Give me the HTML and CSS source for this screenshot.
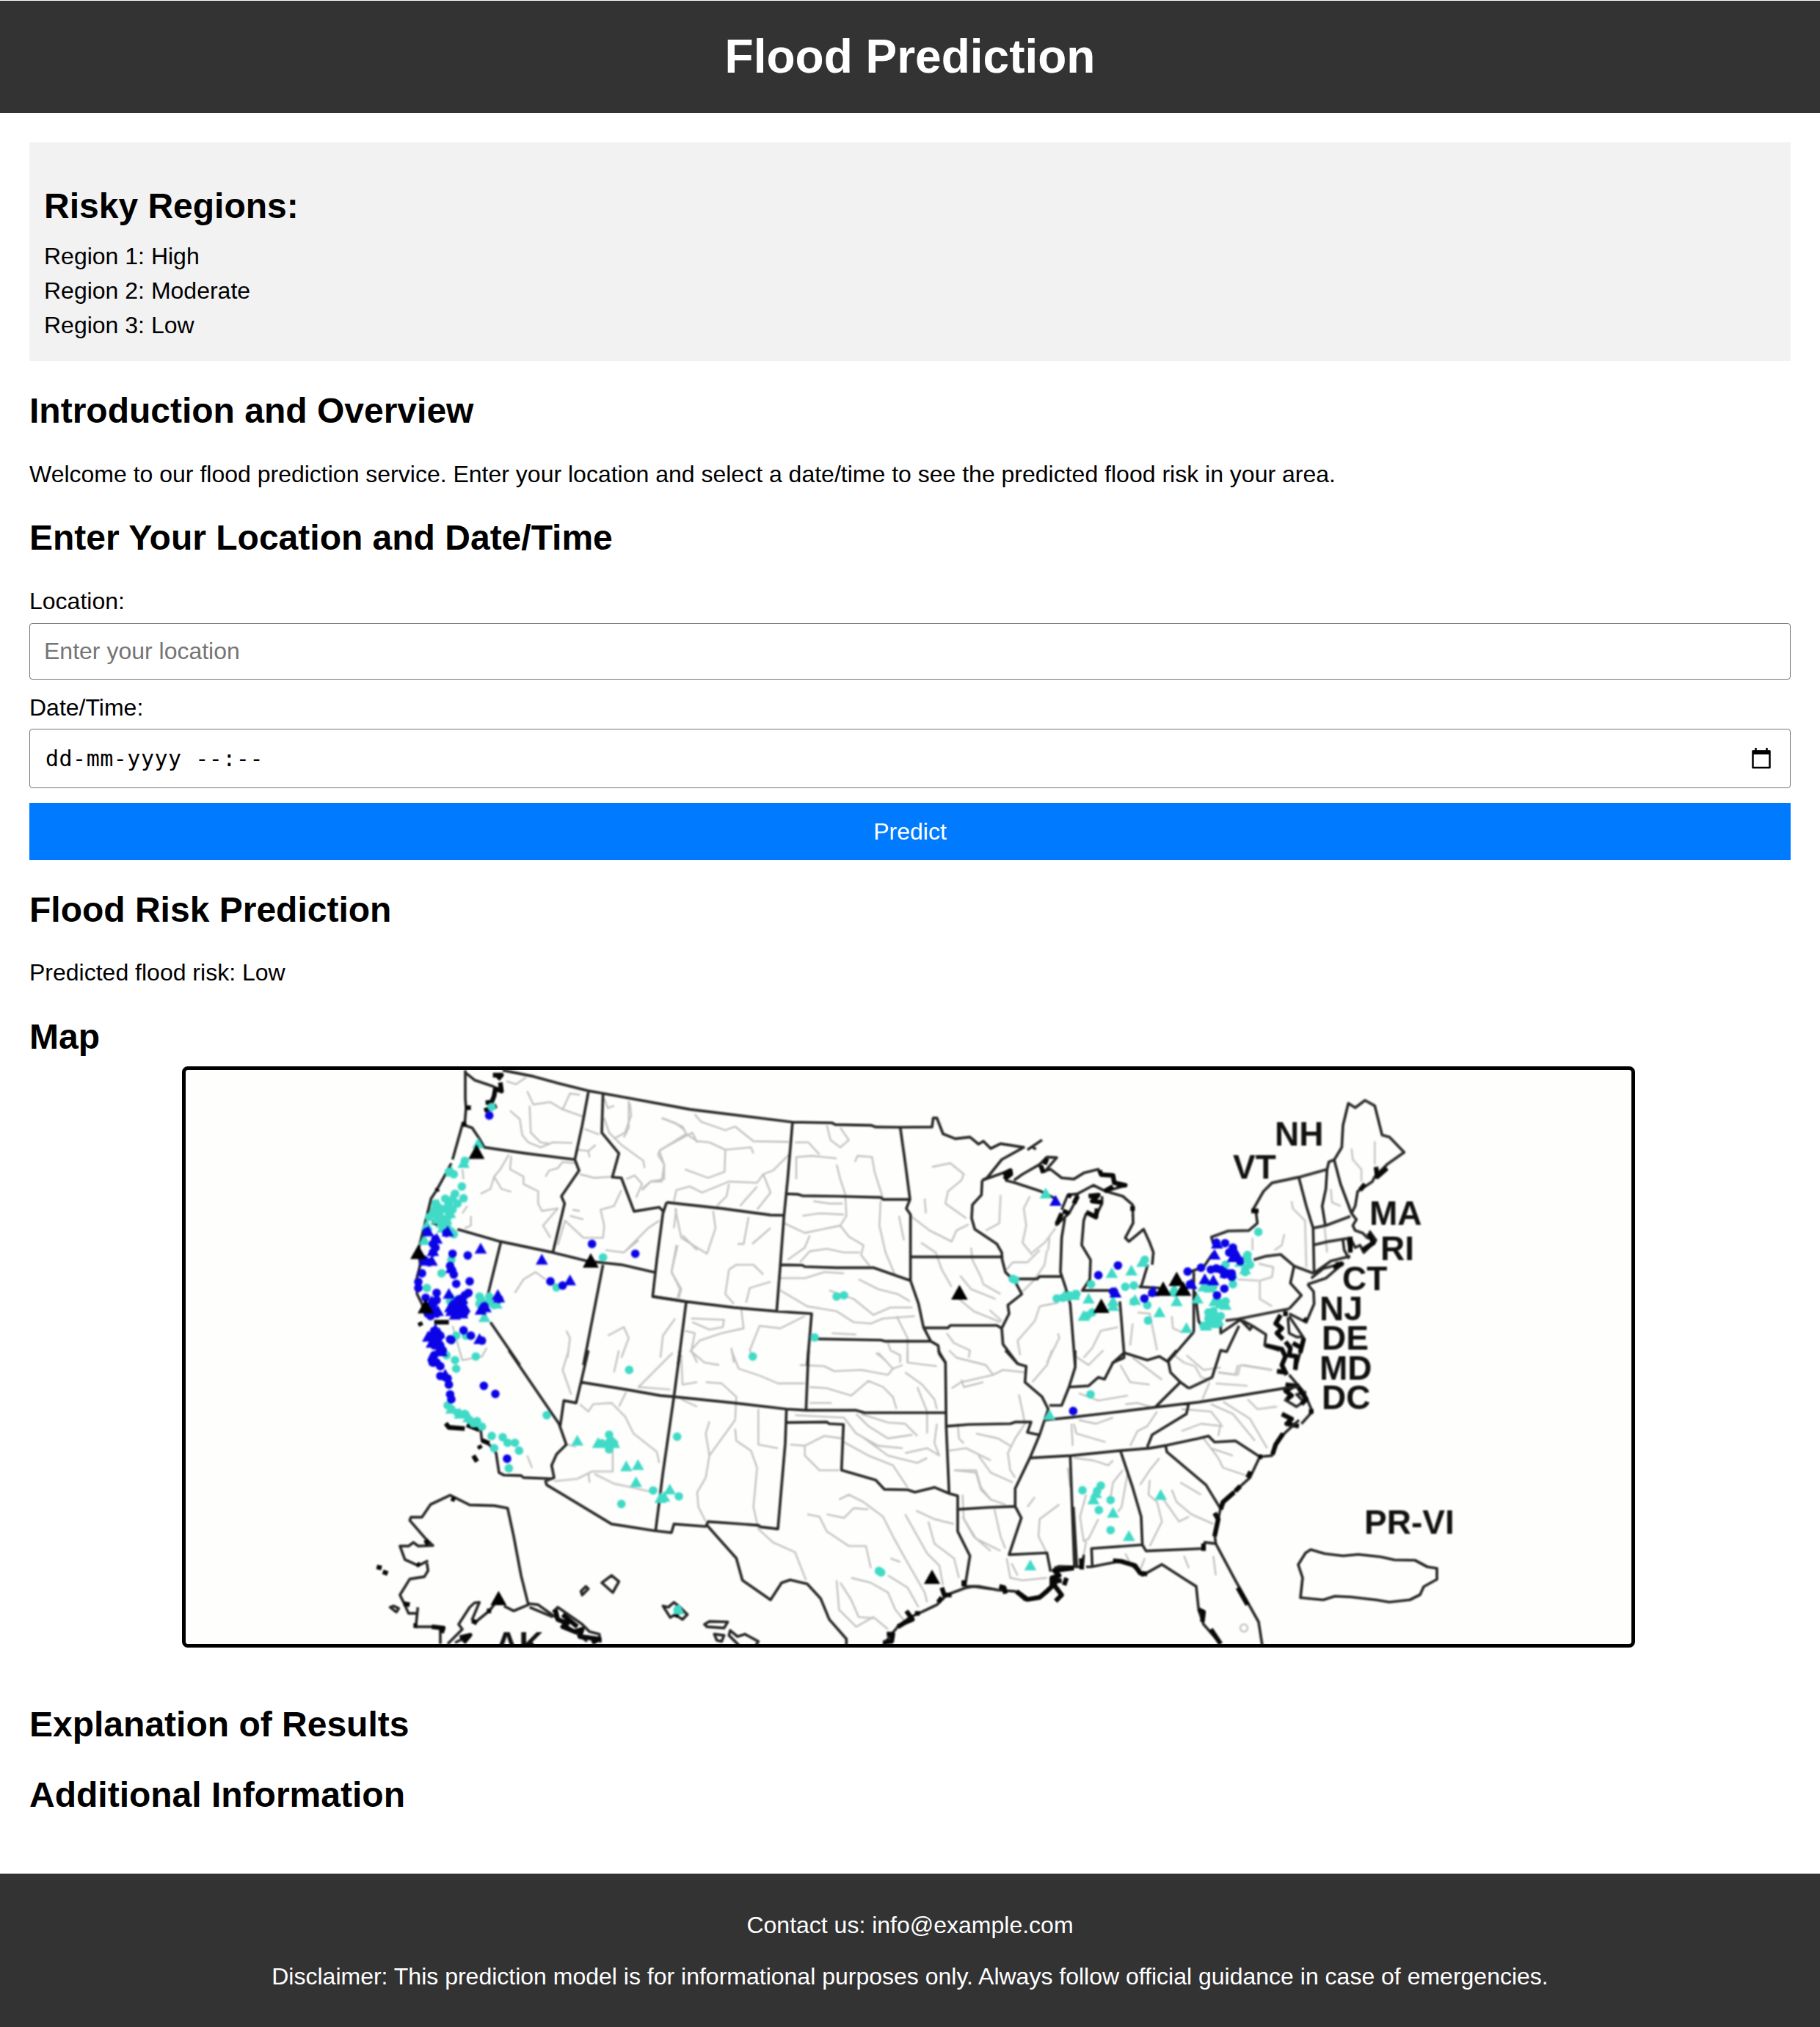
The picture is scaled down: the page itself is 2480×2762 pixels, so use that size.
FILE: index.html
```html
<!DOCTYPE html>
<html lang="en">
<head>
<meta charset="utf-8">
<title>Flood Prediction</title>
<link rel="stylesheet" href="styles.css">
</head>
<body>
<header class="site-header"><h1>Flood Prediction</h1></header>
<main class="content">
  <section class="risky-regions">
    <h2>Risky Regions:</h2>
    <ul>
      <li>Region 1: High</li>
      <li>Region 2: Moderate</li>
      <li>Region 3: Low</li>
    </ul>
  </section>
  <section>
    <h2 class="intro-title">Introduction and Overview</h2>
    <p>Welcome to our flood prediction service. Enter your location and select a date/time to see the predicted flood risk in your area.</p>
  </section>
  <section>
    <h2 class="form-title">Enter Your Location and Date/Time</h2>
    <form class="predict-form">
      <label for="location">Location:</label>
      <input class="field field-location" type="text" id="location" placeholder="Enter your location">
      <label for="datetime">Date/Time:</label>
      <div class="field field-date" id="datetime">
        <span>dd-mm-yyyy --:--</span>
        <svg class="calendar" viewBox="0 0 26 29"><path d="M5.500 0v4M20.500 0v4" stroke="#000" stroke-width="2.500"/><path d="M1.500 4.500h23v22.500h-23z" fill="none" stroke="#000" stroke-width="2.500" stroke-linejoin="round"/><path d="M1 3.500h24v5.500H1z"/></svg>
      </div>
      <button class="predict" type="button">Predict</button>
    </form>
  </section>
  <section>
    <h2>Flood Risk Prediction</h2>
    <p>Predicted flood risk: Low</p>
  </section>
  <section>
    <h2 class="map-title">Map</h2>
    <div class="map">
    <svg class="map-svg" viewBox="253 1458 1970 782" preserveAspectRatio="none">
      <defs>
        <marker id="dn" class="mk" markerUnits="userSpaceOnUse" markerWidth="40" markerHeight="40" refX="20" refY="20"><circle cx="20" cy="20" r="17.500" fill="#0c04e6"/></marker>
        <marker id="dt" class="mk" markerUnits="userSpaceOnUse" markerWidth="40" markerHeight="40" refX="20" refY="20"><circle cx="20" cy="20" r="17.500" fill="#40dac6"/></marker>
        <marker id="tn" class="mk" markerUnits="userSpaceOnUse" markerWidth="56" markerHeight="56" refX="28" refY="28"><path d="M28 3L53 47H3z" fill="#0c04e6"/></marker>
        <marker id="tt" class="mk" markerUnits="userSpaceOnUse" markerWidth="56" markerHeight="56" refX="28" refY="28"><path d="M28 3L53 47H3z" fill="#40dac6"/></marker>
        <marker id="tb" class="mk" markerUnits="userSpaceOnUse" markerWidth="70" markerHeight="70" refX="35" refY="35"><path d="M35 3L68 62H2z" fill="#000"/></marker>
      </defs>
      <g class="soft">
      <!-- rivers -->
      <g class="river">
        <g transform="translate(500 1440) scale(.33333)">
          <path d="M570 100L610 112 650 85M655 140L680 195 750 185 800 215 885 245M800 215L830 150 870 155M665 200L670 310 710 350 745 355M585 220L625 255 635 320 660 350 710 370 760 350 840 352M890 295L950 318M970 170L985 210 1010 200M1075 190L1080 240 1055 310 1010 335M970 250L990 310 1040 360 1130 425 1135 455M590 405L585 460 640 490 640 520 700 550 700 600 715 630 780 620 720 690 750 740M580 400L545 460 520 490 550 540 590 552M520 490L505 540 465 560M730 490L745 465 780 455 800 430 850 435M860 380L905 385 935 360M905 385L910 410M870 480L930 495 1000 490M1040 545L1010 610 955 625 970 690 965 740 885 740 810 670 780 770M1060 500L1095 485 1125 520 1100 575M1125 540L1160 510 1215 500 1215 440 1190 400 1200 380 1330 310 1350 350M1205 250L1260 270 1300 300M1060 790L1150 700 1195 670M975 790L1050 800 1110 750M605 965L640 910 690 880 730 910M1265 620L1255 700M1290 730L1350 790M1270 770L1245 880 1280 950 1270 985M985 1140L1050 1105 1070 1150 1040 1230M815 1120L830 1150 820 1230M1260 1070L1210 1140 1200 1230M1300 1120L1340 1130 1325 1210"/>
          <path d="M390 460L395 500M410 610L390 640M425 650L425 690 400 700M350 1100L390 1240 470 1225 490 1190M840 625L870 630M830 650L885 665"/>
        </g>
        <g transform="translate(850 1440) scale(.33333)">
          <path d="M20 180L20 290 0 330M155 250L240 285 255 315 145 385 165 440 155 510 110 510 75 545M255 315L300 345 350 350 415 380 520 370 530 395M290 235L315 265 415 300 455 285 530 345 675 348M415 380L412 470 345 495 250 460M675 400L610 465 570 480 545 515 430 510 320 555 270 530 215 545 205 590M570 480L600 555 545 625M545 530L475 610M430 520L420 570 380 610M210 620L235 740 340 805 375 700 365 630M215 770L195 880 235 950 225 985M510 655L490 765 465 765M600 700L525 765M700 350L755 350 800 400M705 500L705 410 770 405 870 415M830 280L845 340 885 370 920 340 885 290M945 430L955 405 1015 410 1025 470 1060 580M870 440L885 500 905 560 910 650 885 690 740 720 655 680M775 590L840 600 895 600M730 650L800 640 900 645M885 690L920 735 980 770 970 810 1005 855M670 830L740 780 760 730M720 840L760 795 830 785 900 800 965 800M1050 590L1045 690 1070 800 1110 895M1125 650L1145 750M1260 450L1335 435 1390 480 1380 505 1325 550 1315 600 1400 660M1230 580L1235 640M1172 650L1250 710 1340 755 1360 710 1410 685M640 905L740 905 820 880 900 885M430 870L460 850 530 850 570 890M430 870L415 970 450 1010M600 920L515 945 500 1005M640 955L750 1020 870 1040 940 1085 1010 1090 1060 1070 1190 1060M840 955L940 990 1020 1055 1090 1025 1180 1025M960 910L1040 950 1120 970 1170 1000M1115 1060L1160 1150 1160 1250M275 1070L410 1075 405 1105 350 1115 280 1085M480 1030L490 1110 400 1130 310 1160 275 1200 300 1250M740 1060L640 1110 555 1100 515 1200 525 1220M850 1130L950 1135M440 1190L450 1250M1030 1210L1070 1240M1080 1170L1090 1200 1130 1220 1130 1250"/>
        </g>
        <g transform="translate(1250 1440) scale(.33333)">
          <path d="M15 760L75 800 100 870 140 940M220 780L225 830 260 900 270 930 340 970M175 895L220 950 320 990M170 990L230 1040 340 1085M295 1035L345 1080M340 565L335 680 280 710M460 570L435 620 445 690 430 760 470 810M470 800L520 760 565 700M540 740L535 790M365 870L390 840 450 840 500 790M530 790L520 850 480 910 430 960M575 1130L580 1150 530 1250M500 1020L575 1005M500 1020L480 1080 410 1160 420 1220M820 1105L750 1120 715 1190 680 1230M900 1045L950 1050 980 1200M880 1090L870 1180M1040 1060L1045 1110 1080 1125M120 1130L150 1170 215 1200 210 1230"/>
        </g>
        <g transform="translate(1600 1440) scale(.33333)">
          <path d="M725 375L730 420 765 460 765 510M820 345L820 440M640 540L645 595 680 610M480 590L485 620 535 670 540 860M615 700L625 800M450 725L440 770 410 790M320 740L320 790M345 845L405 860 400 900 350 915 350 990 400 1020M260 910L345 915M0 1220L40 1250 85 1265 110 1310 145 1320M180 1290L260 1300 270 1260 400 1280M170 1335L300 1345M145 1330L115 1400M300 1400L340 1440 420 1430"/>
        </g>
        <g transform="translate(500 1840) scale(.33333)">
          <path d="M825 0L800 80 835 180M870 220L905 250 925 220 1000 215 1055 270 1090 340 1185 415 1195 460M1060 170L1030 230M1030 0L1010 90M1250 10L1170 90 1110 150 1240 160M820 385L855 395M1005 400L1005 495 920 495 860 525 765 535M905 500L910 540M930 505L1010 545 1060 555 1170 580M655 430L675 480M1285 200L1350 230"/>
        </g>
        <g transform="translate(850 1840) scale(.33333)">
          <path d="M440 0L470 75 560 105 630 135 740 135M235 20L240 140 300 130M270 0L330 50 390 60M335 130L400 135 460 190 455 285 350 430 335 340 350 290M350 430L335 520 300 580 305 640 335 700M455 320L460 370 520 410 545 480 530 640 550 730 610 785 700 825 745 940M550 240L550 385 630 400M680 385L740 390 820 350 890 360M740 390L740 430 800 490 880 490M720 60L820 65 860 85 970 80 1080 100 1100 75M1040 10L1100 75 1140 60M760 150L830 155 930 185 1000 125 1060 150 1100 190 1115 240M1150 90L1220 140 1270 200 1280 240M1200 150L1240 250 1240 340M1160 0L1160 50 1280 65M760 215L850 215M700 265L900 275 950 340 1040 390 1140 400M950 260L1000 310 1080 360 1180 345M970 260L1080 295 1150 300 1200 350M900 375L1000 430 1100 470 1160 560M970 350L1080 430 1200 460 1240 440M1280 300L1270 380 1290 430 1240 400 1150 420M1330 410L1400 400 1500 450M1350 490L1440 500 1460 570 1500 610M880 610L920 590 980 620 1060 680 1100 760 1150 850 1230 990 1240 1030M750 670L800 680 830 740 920 800 990 800 1010 890M830 670L900 685 940 645 1000 650M1150 670L1240 830 1290 880 1305 960M1195 655L1270 690 1350 710M1245 700L1270 790 1350 850 1370 930M930 930L1010 950 1080 990 1110 1060 1150 1110M1080 920L1160 970 1205 1050M870 940L880 1060 950 1130 1020 1090 1080 1140M885 950L930 1020 960 1090 1020 1095M1090 850L1130 865M1385 590L1390 690 1430 760 1500 820M1365 300L1370 360 1390 380"/>
        </g>
        <g transform="translate(1250 1840) scale(.33333)">
          <path d="M130 0L160 30 280 60 310 100 180 130 140 155M180 120L190 150 270 130M310 100L350 80 440 90M550 0L530 60 470 130M415 180L430 250 440 300 400 360 370 420 380 490 400 520M240 340L330 360 380 390M150 490L240 490 260 560 300 610 360 630M250 430L300 500 390 540M315 650L340 760 360 810M185 680L240 770 340 820M480 600L450 640M580 630L500 690 495 760 530 830M365 850L380 930 430 940 530 930M385 870L410 920M640 20L700 60 760 0M660 175L740 205 860 185M830 60L870 130 950 140M880 30L1000 120M850 220L900 215 950 230M640 300L650 340 770 375M660 285L730 300 800 275M615 480L625 560M640 440L720 450 780 470 800 450M630 300L635 390M980 250L940 310 900 330 870 390M1080 240L1200 250 1240 300 1230 350M1080 330L1160 300 1250 310M1200 220L1290 260 1380 370M1250 210L1360 280 1430 400M1170 360L1230 440 1250 480 1340 510M1200 400L1290 430M840 490L800 540 790 600M860 500L835 640 820 660M740 690L700 770 680 780 665 680 690 590M690 780L680 840M990 440L950 490 910 550M950 530L945 590 980 620 1000 700 960 780 950 800M1040 570L1060 620 1120 670 1210 710M1075 540L1160 590M1000 600L1070 700 1110 680M1090 840L1110 890M1210 840L1220 920M850 830L870 870M930 850L910 900M1100 20L1170 80 1240 70M1330 60L1450 80M1310 60L1300 100 1230 90"/>
          <circle cx="1335" cy="1135" r="15"/>
        </g>
      </g>
      <!-- coasts and state borders -->
      <g class="line">
        <g transform="translate(500 1440) scale(.33333)">
          <path d="M402 55L402 170 405 210 400 270 388 285 350 420M345 435L310 500 285 545 262 580 250 630 225 730 210 790 218 850 205 900 205 970 225 1010 240 1060M403 65L440 95 520 122M555 55L680 80 790 110 910 140 1050 165M385 275L430 290 460 335 480 370 650 395 850 420M905 145L880 280 850 420 867 465 795 570 808 600 760 800M965 150L960 310 1030 395 1003 492 1040 495 1092 632 1195 615 1215 635M370 705L545 755 760 800 900 835 1040 850 1180 882M1225 595L1210 640 1185 830 1168 980 1300 1000M548 755L495 970M505 1085L625 1260M965 850L885 1260"/>
          <path class="bold" d="M515 75H550L535 92M545 105L550 140 525 130 520 160 510 185 485 188M480 220L530 200M395 265L400 285M405 208H425M275 1085H335M215 1085L222 1100M290 540L285 548M265 675L290 682"/>
        </g>
        <g transform="translate(850 1440) scale(.33333)">
          <path d="M0 165L270 215 690 267 850 270 865 277 1010 280 1030 287 1130 288 1260 287 1265 250 1280 250 1305 315 1355 335 1415 328 1450 357 1470 345 1500 375 1540 355 1635 370 1545 420 1485 495 1465 505M690 265L670 500 655 650 640 850 625 1040M175 595L400 620 600 647 655 648M665 560L710 562 730 568 870 570 1050 575 1060 583 1170 583M1130 288L1150 430 1170 583 1155 620 1172 645 1172 915M640 850L730 852 740 858 870 862 1020 862 1172 915 1205 1010 1225 1105 1255 1163 1285 1180 1290 1215 1315 1250M1172 818H1545M1225 1108H1325L1335 1098 1525 1098 1545 1110M118 980L250 1000 450 1025 620 1040 768 1050 750 1260M790 1153L1050 1158 1070 1163 1255 1163M255 1003L222 1260"/>
        </g>
        <g transform="translate(1250 1440) scale(.33333)">
          <path d="M265 505L262 565 225 605 222 660 235 705 325 765 345 800 347 830 360 880 400 920 427 970 370 1015 375 1050 345 1110 350 1175 410 1255M265 505L350 475M360 505L400 515 505 550 565 580M395 505L430 480 500 440 530 410 570 412 520 470 500 440M510 470L545 460 590 495 640 500 680 475 740 460 750 480 800 485M655 560L720 525 770 550 855 525M565 690L620 640 655 575 655 560 615 565 590 625M603 660L590 740 585 880 605 940 625 1010 645 1260M400 908H490L500 898H590M770 550L840 570 880 605 882 680 850 740 865 755 925 705 950 760 965 800 960 850M942 850L915 940M755 570L755 600 730 650M690 640L680 670 672 770 708 830 705 910 675 955M670 955H820M905 940L990 945M828 1000L845 1210 795 1255M845 1210L940 1240 990 1225 1025 1247 1130 1125M1130 880L1130 1125M1135 960L1150 1080 1170 1115M1110 880L1170 860 1210 800M450 380L510 340M465 365L485 378"/>
          <path class="bold" d="M350 480L380 465 382 480 355 500M505 445L515 475M530 415L520 440M745 465L752 482 800 485 805 515 850 525 815 525M765 550L800 530M590 640L570 685M595 630L620 640M640 600L655 570M615 565L630 570M700 570L740 565 715 590 755 595M690 635L730 655 735 620M880 610V630"/>
        </g>
        <g transform="translate(1600 1440) scale(.33333)">
          <path d="M160 765L152 737 220 712 305 710 340 680 335 640 322 625 365 550 400 515 510 492 625 460 632 430 655 420 685 370 690 280 712 190 740 208 780 178 820 200 850 320 880 328 940 390 870 440 820 490 810 510 750 550 740 610 725 640M510 495L540 610 568 700 572 885M625 460L620 540 605 610 618 690M655 425L680 520 725 640M568 700L618 690 720 652M568 770L630 755 710 742 720 800M725 640L745 665 730 690 740 710 770 720 790 740 820 745 800 715 825 750 775 800 760 770 740 780 720 740M690 750L695 790 715 825M570 885L640 835 720 815M545 930L620 905 690 845 610 865 560 905M325 830L375 815 435 808 490 855 570 885M490 855L475 925 520 975 470 1030M545 930L570 960 572 1010 540 1085 470 1050M210 1078L260 1072 470 1030M190 1085V1130L270 1075 310 1115 320 1100 280 1078M320 1100L375 1135 370 1180 430 1200M265 1100L215 1205 190 1200 155 1310 60 1355M470 1060L530 1150 515 1210 495 1280M465 1065L470 1130 500 1145 530 1145M470 1300L530 1370 565 1450 520 1500M450 1400L500 1430 530 1410 500 1380 540 1370"/>
          <path class="bold" d="M825 450L830 490 870 455M780 520L760 545M315 630H345M435 1055L415 1090 440 1110 420 1130 445 1155M375 1180L440 1195 455 1225 440 1260 460 1300M420 1285L455 1290M455 1165L475 1190 470 1220 500 1225 495 1280M485 1170L520 1190M530 1150L515 1210M720 735V800M650 860L690 845M690 845L660 850M795 720L815 760 770 790M540 1080L530 1070M455 1040V1060M455 1340L490 1345 455 1365 480 1385 460 1400M500 1340L540 1400 520 1420M440 1460L480 1480 460 1500 510 1510M560 1440V1460"/>
        </g>
        <g transform="translate(500 1840) scale(.33333)">
          <path d="M465 325L470 370 500 385 528 420 540 500 560 510 630 512 640 520 760 525M580 0L785 300 815 385 775 425 755 470 765 520 730 535 735 550 1000 710 1180 738M905 0L875 130 855 215 805 205 790 310M875 130L1060 160 1200 185 1260 190M1280 0L1255 190 1210 500 1180 738M300 1200V1135L265 1130 200 1130 208 1050M200 1075L170 1075 150 1030 135 1000 175 935 235 925 250 900 245 870M250 860L210 880 155 855 135 800 170 800 190 785 210 800 270 798 240 770 175 695 180 682 225 682 260 630 340 592 420 632 520 635 575 645 600 760 630 920 660 1040 600 1065 560 1045M660 1035L700 1040 770 1090 900 1190M665 1050L760 1090M330 1200L390 1140 375 1120 420 1050 440 1032 460 1030 430 1100 445 1110 500 1065 520 1040M360 1195L430 1160M760 1070L780 1050 880 1120 910 1150 950 1160 955 1195M960 950L1000 920 1030 945 1005 990ZM880 1000L875 985 895 965 905 975ZM1210 1045L1232 1050 1255 1030 1280 1050 1310 1080 1290 1100 1260 1080 1240 1092ZM95 1050L120 1070 130 1055 110 1045Z"/>
          <path class="bold" d="M322 298L335 315 400 320M408 305L460 325M458 388L465 402M435 430L450 455M470 368L500 380M345 605L360 612M240 775L250 795M205 870L215 882M40 885L60 890M65 905L85 912M150 1035L175 1040M265 1130L312 1135 305 1155M205 1125H190M430 1105L450 1115M490 1065H508M380 1175L420 1165 395 1195M770 1060L780 1100 820 1115 800 1130 850 1150 880 1140 870 1170 950 1180 920 1195M800 1080L860 1130M1260 1090L1270 1070"/>
        </g>
        <g transform="translate(850 1840) scale(.33333)">
          <path d="M665 240L660 380 630 730 560 722 550 715 345 700 335 720 205 710 195 745 130 738M210 190L450 215 665 240 745 245 950 245 985 255 1315 255M755 0L745 245M665 295L830 293 840 300 898 303 890 490 1030 530 1065 568 1160 570 1190 580 1270 560 1330 585M1285 0L1315 50 1318 310 1330 585 1365 595 1365 740 1415 840 1395 965M340 715L460 850 485 940 600 1020 645 950 680 938 750 955 805 1015 840 1100 910 1180 910 1205M1060 1205L1095 1160 1120 1130 1170 1090 1200 1078 1280 1040 1320 1000 1400 970 1430 965 1500 975M330 1120L350 1108 425 1110 410 1135 340 1130ZM370 1160L410 1165 400 1190 380 1185ZM470 1205L430 1165 435 1145 465 1170 495 1160 550 1190 540 1205"/>
          <path class="bold" d="M1060 1195L1095 1190 1100 1160 1075 1160M1120 1130L1145 1115 1180 1100 1155 1065M1190 1075H1210M1300 970L1310 1000 1340 1000M1390 940V965M1285 1030L1300 1010"/>
        </g>
        <g transform="translate(1250 1840) scale(.33333)">
          <path d="M360 0L410 55 445 65 440 130 510 190 535 240 520 285 500 345 460 440 400 565 400 638 425 685 375 835 530 828 545 905M645 0L645 70 620 150 590 225 540 225M620 150L700 145 740 110 765 118 800 50 845 30 845 5M1025 40L1060 0M1025 40L1035 90 1075 130 975 230M1075 130L1110 155M120 310L210 303 380 300 400 293 465 293 450 335 495 345M170 650L290 642 400 638M520 285L620 275 790 255 975 232 1150 212 1300 188 1500 155 1560 148M460 440L630 430 830 410 950 400 1020 388 1150 360 1190 350 1215 375 1300 370 1400 435M1110 215L1100 260 960 345 940 395M625 430L635 700 642 880M638 640L652 880M830 410L880 560 915 680 920 795 935 820 1170 810 1175 785 1220 790M715 880L712 810 920 795M1015 390L1020 415 1180 550 1235 640M1560 285L1500 340 1465 390 1450 430 1400 435 1360 520 1310 565 1245 620 1230 690 1215 750 1220 790 1300 940 1395 1110 1410 1205M200 965L250 965 330 980 400 985 440 1020 500 1005 550 960M560 890L580 883 650 885 670 885 680 840 675 895M690 885L710 885 840 860 880 880 920 920 1000 875 1100 940 1140 965 1150 1060 1170 1120 1240 1200"/>
          <path class="bold" d="M1495 340L1465 385 1452 425M1410 435H1395M1362 495L1350 520M1320 555L1300 575M1295 580L1250 620 1240 650M1215 665L1230 690 1215 760M1170 790V820M1310 970L1350 1040M1150 1060L1170 1070 1165 1110M1200 1140L1240 1200M800 860L830 862 890 880 910 910 940 915M670 850L672 895M335 965L355 970 360 995M405 985L450 1018 500 1010 530 985 550 965 550 930 580 920 560 900 640 890M570 930L560 960 590 1000 565 1025M560 945L590 940M610 930L600 960"/>
        </g>
        <path d="M1786 2111.500L1805 2117 1830 2120 1851 2118 1882 2121.500 1900 2125.500 1928 2126 1945 2135 1958 2137V2152L1940 2162 1935 2173 1921 2180 1893 2183 1875 2180 1840 2176 1819 2175 1803 2180 1772 2177 1775 2150 1769 2132 1779 2116Z"/>
      </g>
      <!-- gauge markers -->
      <g transform="translate(500 1440) scale(.33333)">
        <polyline class="tt" points="395 435 345 470 350 575 290 605 340 610 300 645 325 665 265 640 245 690 235 750 310 700 470 990 480 1065 530 1010 350 990 455 355 320 620 305 680 330 690 285 665 340 640"/>
        <polyline class="dt" points="335 470 355 480 400 425 388 530 395 578 360 560 370 600 280 600 300 620 350 625 290 650 335 650 255 655 310 690 345 715 345 830 305 885 245 945 460 980 520 1015 470 1020 365 1140 325 1220 445 1225 405 1140 360 1240 500 980 965 820 775 943 510 205 355 725 275 625 335 600 320 580 500 1005 460 1010 340 1000"/>
        <polyline class="tn" points="250 715 330 715 465 785 285 745 270 795 265 835 235 835 345 865 335 970 265 1000 260 1045 290 1040 390 990 340 1025 400 1025 360 1055 390 1050 365 1000 485 1025 465 1035 535 975 280 1115 250 1145 285 1145 265 1170 300 1190 460 1155 540 985 715 830 830 915 270 1130 295 1130 275 1155 345 1040 375 1035"/>
        <polyline class="dn" points="245 715 325 720 280 745 270 765 270 800 235 830 350 805 412 812 340 855 348 872 355 890 365 928 420 918 225 885 210 920 210 945 285 965 285 995 240 985 415 965 400 975 380 990 355 1010 375 1050 260 1060 400 1045 395 1118 345 1158 300 1180 270 1230 270 1250 340 1155 425 1140 250 1050 500 240 750 918 800 935 920 765 1097 805 275 1120 300 1140 260 1140 280 1160 275 1180 310 1200 270 1030 285 1050 370 1020 350 1040 390 1010 280 780 255 840 480 1020 540 990 470 1160"/>
        <polyline class="tb" points="448 390 210 800 240 1022 915 835"/>
      </g>
      <g transform="translate(850 1440) scale(.33333)">
        <polyline class="dt" points="870 980 900 975 780 1147 527 1225"/>
        <polyline class="tb" points="1372 965"/>
      </g>
      <g transform="translate(1250 1440) scale(.33333)">
        <polyline class="tt" points="525 560 600 980 640 975 700 990 680 1060 795 885 875 875 920 840 800 1000 800 1020 890 995 990 1045 1060 1000 1050 950 1100 1110 1190 930 1170 940 1145 990 1240 1010 1210 1050 1230 1080 1180 1100 1210 1090 1320 840 1340 870 1200 1060 1260 1015 1215 1000 1195 945"/>
        <polyline class="dt" points="570 988 595 985 620 975 650 970 390 908 400 912 710 930 850 940 885 935 930 830 715 1045 695 1058 885 1000 940 1015 943 1078 1290 900 1260 850 1170 1100 1210 1040 1260 1000 1290 930 1230 1090 1240 1060 1190 1070 1220 1000 1340 880 1220 1060 1200 1080 1190 1045 1210 940 1345 820 1050 965"/>
        <polyline class="tn" points="565 590 810 965 965 960 1215 810 1225 765 1300 800 1260 885 1120 930 1175 910 1210 915 1290 820"/>
        <polyline class="dn" points="740 893 820 853 800 960 928 988 960 965 1105 878 1160 862 1222 760 1258 762 1200 870 1240 870 1270 885 1285 900 1290 780 1300 810 1320 835 1225 975 1255 948 1115 930 1255 890 1275 800 1290 790 1222 865 1285 885"/>
        <polyline class="tb" points="172 965 752 1020 1060 910 1005 950 1087 950"/>
      </g>
      <g transform="translate(1600 1440) scale(.33333)"><polyline class="dt" points="344 716 300 810 310 850 300 830 290 870"/></g>
      <g transform="translate(500 1840) scale(.33333)">
        <polyline class="dt" points="365 75 330 225 345 240 370 255 400 260 420 285 450 290 470 312 435 298 510 350 520 400 555 355 575 378 605 378 622 410 580 482 735 265 1072 80 1268 353 1170 573 1275 597 1040 628 1270 1060 960 380 990 345 1010 380 990 405"/>
        <polyline class="tt" points="345 240 380 260 415 275 450 295 860 370 945 380 995 360 1010 380 990 380 1060 475 1108 470 1100 540 1238 570 1215 600 1200 605 1275 1060"/>
        <polyline class="dn" points="265 40 275 20 300 65 285 50 300 105 330 115 320 110 335 140 340 180 345 200 478 145 525 178 573 443"/>
        <polyline class="tn" points="275 40 320 100 305 5"/>
        <polyline class="tb" points="538 1015"/>
      </g>
      <g transform="translate(850 1840) scale(.33333)"><polyline class="dt" points="1043 902 1052 908"/><polyline class="tb" points="1260 928"/></g>
      <g transform="translate(1250 1840) scale(.33333)">
        <polyline class="dt" points="708 180 675 572 750 553 735 575 790 612 742 653 790 735"/>
        <polyline class="tt" points="720 610 730 585 800 665 865 760 995 592 462 880 540 265"/>
        <polyline class="dn" points="637 248"/>
      </g>
      <g class="label">
        <text x="1737" y="1561">NH</text><text x="1680" y="1606">VT</text><text x="1866" y="1669">MA</text><text x="1881" y="1717">RI</text><text x="1829" y="1758">CT</text><text x="1798" y="1799">NJ</text><text x="1801" y="1839">DE</text><text x="1798" y="1880">MD</text><text x="1801" y="1920">DC</text><text x="1859" y="2090">PR-VI</text><text x="674" y="2256">AK</text>
      </g>
      </g>
    </svg>
    </div>
  </section>
  <section><h2>Explanation of Results</h2></section>
  <section><h2 class="info-title">Additional Information</h2></section>
</main>
<footer class="site-footer">
  <p>Contact us: info@example.com</p>
  <p>Disclaimer: This prediction model is for informational purposes only. Always follow official guidance in case of emergencies.</p>
</footer>
</body>
</html>
```
FILE: styles.css
```css
* { box-sizing: border-box; }
body {
  margin: 0;
  padding-top: 1px;
  background: #fff;
  color: #000;
  font: 32px/37px "Liberation Sans", Arial, sans-serif;
}
h1, h2 { margin: 0; font-weight: bold; }
h1 { font-size: 64px; line-height: 73px; }
h2 { font-size: 48px; line-height: 55px; margin: 40px 0; }
p { margin: 32px 0; }
.site-header { background: #333; color: #fff; padding: 40px; text-align: center; }
.content { padding: 40px; display: flow-root; }
.risky-regions { background: #f2f2f2; padding: 20px; height: 298px; display: flow-root; }
.risky-regions h2 { margin: 39px 0 23px; }
.risky-regions ul { list-style: none; margin: 0; padding: 0; }
.risky-regions li { margin-bottom: 10px; }
h2.intro-title, h2.form-title { margin-bottom: 41px; }
.predict-form { display: flex; flex-direction: column; }
.predict-form label { margin-bottom: 10px; }
.predict-form label:first-child { margin-bottom: 11px; }
.field {
  width: 100%;
  margin: 0 0 20px;
  padding: 0 19px;
  border: 1px solid #767676;
  border-radius: 4px;
  background: #fff;
  font: inherit;
}
.field-location { height: 77px; }
.field-location::placeholder { color: #757575; opacity: 1; }
.field-date {
  height: 81px;
  display: flex;
  align-items: center;
  justify-content: space-between;
  font-family: "DejaVu Sans Mono", monospace;
  font-size: 30px;
  letter-spacing: .5px;
  padding-left: 21px;
  padding-right: 26px;
}
.calendar { width: 26px; height: 29px; }
.predict { height: 78px; border: 0; background: #007bff; color: #fff; font: inherit; }
h2.map-title { margin: 41px 0 13px; }
.map {
  width: 1980px;
  height: 792px;
  margin: 0 auto 77px 208px;
  border: 5px solid #000;
  border-radius: 8px;
  overflow: hidden;
  background: #fefefd;
}
.map-svg { display: block; width: 1970px; height: 782px; }
.soft { filter: blur(.9px); }
.river path, .river circle { fill: none; stroke: #c2c0c0; stroke-width: 7; stroke-linejoin: round; }
.line path { fill: none; stroke: #262626; stroke-width: 11; stroke-linejoin: round; }
.line > path { stroke-width: 3.700px; }
.line .bold { stroke: #080808; stroke-width: 19; }
.mk { overflow: visible; }
polyline { fill: none; stroke: none; }
.dn { marker: url(#dn); }
.dt { marker: url(#dt); }
.tn { marker: url(#tn); }
.tt { marker: url(#tt); }
.tb { marker: url(#tb); }
.label { font: bold 46px "Liberation Sans", Arial, sans-serif; fill: #111; }
h2.info-title { margin-top: 41px; }
.site-footer {
  background: #333;
  color: #fff;
  padding: 20px;
  height: 209px;
  text-align: center;
  display: flow-root;
}
.site-footer p + p { margin-top: 33px; }
```
